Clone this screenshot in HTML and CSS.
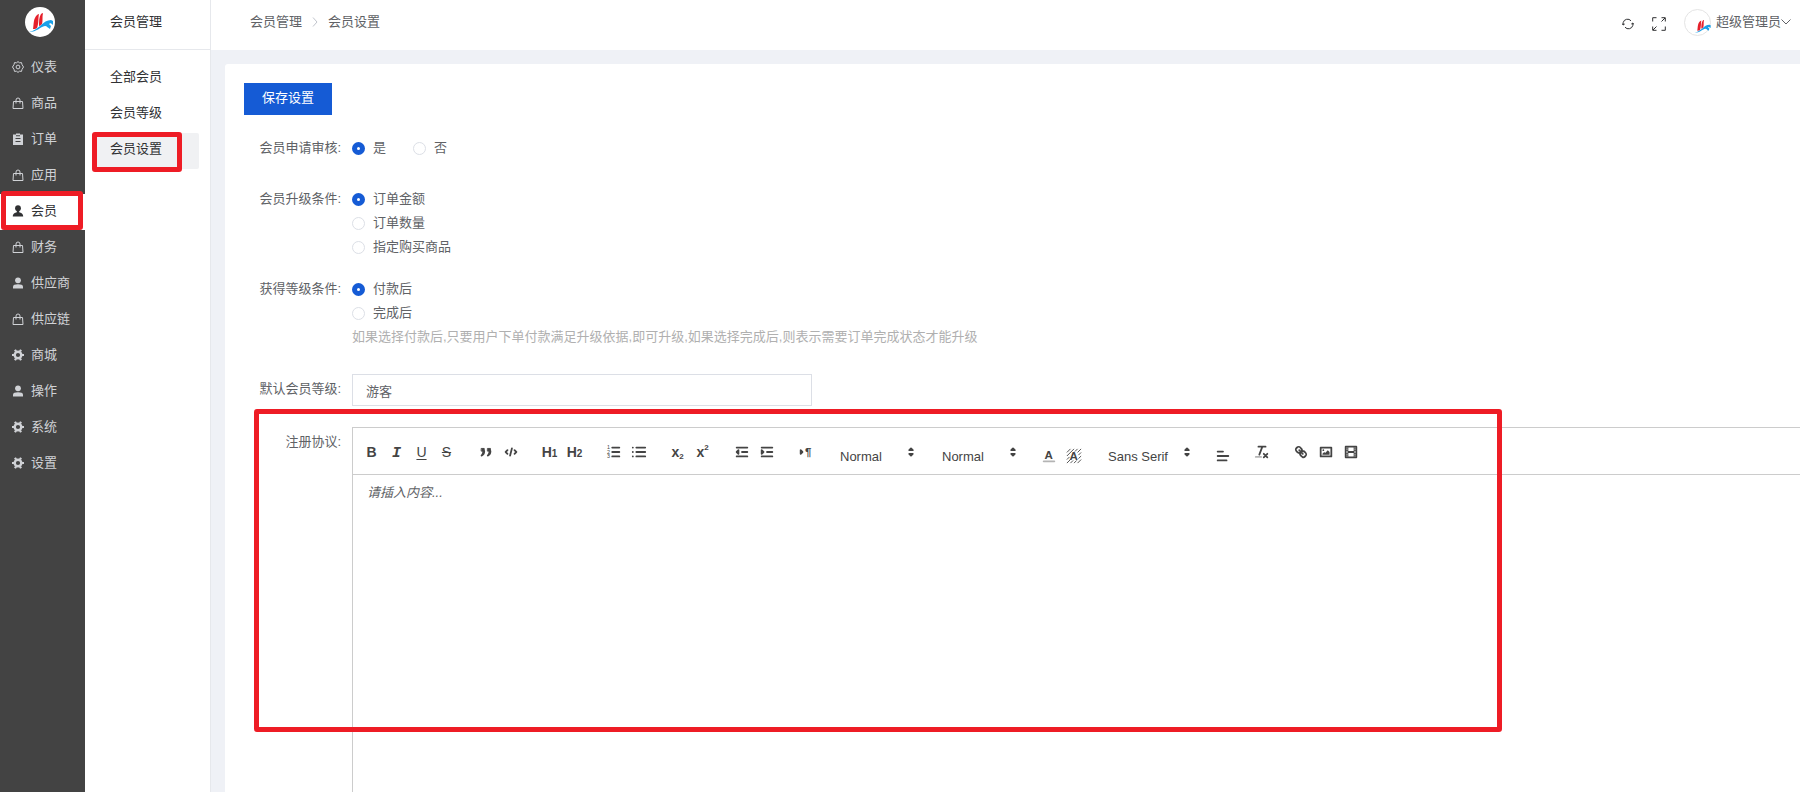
FILE: index.html
```html
<!DOCTYPE html>
<html lang="zh-CN">
  <head>
    <meta charset="UTF-8">
    <meta name="viewport" content="width=device-width, initial-scale=1.0">
    <link rel="stylesheet" href="styles.css">
    <title>会员设置</title>
  </head>
  <body>
    <svg class="sprite" aria-hidden="true">
      <symbol id="i-logo" viewBox="0 0 30 30">
        <path fill="#e5202b" d="M8 22C9 17 8 12 12 8c1-1 2-1 2-1-1 4 0 9-2 14-1 1-3 1-4 1zM14 19c0-5 0-9 2-12 1-1 2-1 2-1-1 4 0 8-1 11-1 1-2 2-3 2z"/>
        <path fill="#1aa0e8" d="M4 25c5-1 8-4 11-6 4-4 7-6 11-6l2 1v4c-2-2-3-2-4-1l2 2-1 3c-2-1-3-3-5-3-5 1-8 6-16 6z"/>
      </symbol>
      <symbol id="i-bag" viewBox="0 0 12 12">
        <path class="line" d="M1.500 4.500h9l.5 7H1zM4 6.500V3a2 2 0 0 1 4 0v3.500"/>
      </symbol>
      <symbol id="i-board" viewBox="0 0 12 12">
        <path fill="currentColor" fill-rule="evenodd" d="M1 1.500h3V.5h4v1h3V12H1zM3.500 5v1h5V5zm0 3v1h5V8zM4 2.300v1h4v-1z"/>
      </symbol>
      <symbol id="i-user" viewBox="0 0 12 12">
        <circle fill="currentColor" cx="6" cy="3.300" r="2.900"/>
        <path fill="currentColor" d="M1 11.500V9.500C1 8 3 7.200 6 7.200s5 .8 5 2.300v2z"/>
      </symbol>
      <symbol id="i-member" viewBox="0 0 12 12">
        <circle fill="currentColor" cx="6" cy="3.200" r="2.900"/>
        <path fill="currentColor" d="M.8 11.500C.8 8.500 3 8 4.800 7.300V5.500h2.400v1.800C9 8 11.200 8.500 11.200 11.500z"/>
      </symbol>
      <symbol id="i-gear" viewBox="0 0 12 12">
        <circle cx="6" cy="6" r="3.300" fill="none" stroke="currentColor" stroke-width="2.400"/>
        <path stroke="currentColor" stroke-width="2.200" d="M0 6h2M10 6h2M3 .8l1 1.700M8 9.500l1 1.700M9 .8L8 2.500M4 9.500l-1 1.700"/>
      </symbol>
      <symbol id="i-gear-line" viewBox="0 0 12 12">
        <circle class="line" cx="6" cy="6" r="1.900"/>
        <path class="line" d="M4.500 1.800L6 .6l1.500 1.200 2-.2.500 2L11.500 6 10 8.400l-.5 2-2-.2L6 11.400l-1.500-1.200-2 .2-.5-2L.5 6 2 3.600l.5-2z"/>
      </symbol>
    </svg>

    <div class="layout">
      <aside class="sidebar">
        <div class="logo"><svg><use href="#i-logo"/></svg></div>
        <nav>
          <a href="#"><svg><use href="#i-gear-line"/></svg>仪表</a>
          <a href="#"><svg><use href="#i-bag"/></svg>商品</a>
          <a href="#"><svg><use href="#i-board"/></svg>订单</a>
          <a href="#"><svg><use href="#i-bag"/></svg>应用</a>
          <a href="#" class="active"><svg><use href="#i-member"/></svg>会员<span class="mark"></span></a>
          <a href="#"><svg><use href="#i-bag"/></svg>财务</a>
          <a href="#"><svg><use href="#i-user"/></svg>供应商</a>
          <a href="#"><svg><use href="#i-bag"/></svg>供应链</a>
          <a href="#"><svg><use href="#i-gear"/></svg>商城</a>
          <a href="#"><svg><use href="#i-user"/></svg>操作</a>
          <a href="#"><svg><use href="#i-gear"/></svg>系统</a>
          <a href="#"><svg><use href="#i-gear"/></svg>设置</a>
        </nav>
      </aside>

      <aside class="submenu">
        <div class="submenu-title">会员管理</div>
        <nav>
          <a href="#">全部会员</a>
          <a href="#">会员等级</a>
          <a href="#" class="active">会员设置<span class="mark"></span></a>
        </nav>
      </aside>

      <main class="main">
        <header class="topbar">
          <div class="breadcrumb">
            <a href="#">会员管理</a>
            <svg class="sep" viewBox="0 0 6 10"><path class="line" d="M1 .5L5 5 1 9.500"/></svg>
            <span>会员设置</span>
          </div>
          <div class="tools">
            <button class="tool" aria-label="刷新">
              <svg viewBox="0 0 12 12"><path class="line" d="M1.200 7V4.500A4.500 4.500 0 0 1 9 2.800M10.800 5v2.500A4.500 4.500 0 0 1 3 9.200M.2 5.500l1 1.500 1.500-1M11.800 6.500l-1-1.500-1.500 1"/></svg>
            </button>
            <button class="tool" aria-label="全屏">
              <svg class="full" viewBox="0 0 14 14"><path class="line" d="M.7 4.500V.7h3.800M9.500.7h3.800v3.800M13.300 9.500v3.800H9.500M4.500 13.300H.7V9.500M13 1L9.500 4.500M1 13l3.500-3.500"/></svg>
            </button>
            <a href="#" class="user">
              <span class="avatar"><svg><use href="#i-logo"/></svg></span>
              超级管理员
              <svg class="caret" viewBox="0 0 10 6"><path class="line" d="M.5.5L5 5 9.500.5"/></svg>
            </a>
          </div>
        </header>

        <form class="card">
          <button type="button" class="save">保存设置</button>

          <div class="row" role="radiogroup" aria-labelledby="l-audit">
            <span class="label" id="l-audit">会员申请审核:</span>
            <div class="inline">
              <label class="radio"><input type="radio" name="audit" checked>是</label>
              <label class="radio"><input type="radio" name="audit">否</label>
            </div>
          </div>

          <div class="row row-upgrade" role="radiogroup" aria-labelledby="l-upgrade">
            <span class="label" id="l-upgrade">会员升级条件:</span>
            <div>
              <label class="radio"><input type="radio" name="upgrade" checked>订单金额</label>
              <label class="radio"><input type="radio" name="upgrade">订单数量</label>
              <label class="radio"><input type="radio" name="upgrade">指定购买商品</label>
            </div>
          </div>

          <div class="row row-hint" role="radiogroup" aria-labelledby="l-when">
            <span class="label" id="l-when">获得等级条件:</span>
            <div>
              <label class="radio"><input type="radio" name="when" checked>付款后</label>
              <label class="radio"><input type="radio" name="when">完成后</label>
              <p class="hint">如果选择付款后,只要用户下单付款满足升级依据,即可升级,如果选择完成后,则表示需要订单完成状态才能升级</p>
            </div>
          </div>

          <div class="row row-level">
            <label class="label" for="level">默认会员等级:</label>
            <input type="text" class="text" id="level" value="游客">
          </div>

          <div class="row row-editor">
            <label class="label" for="agreement">注册协议:</label>
            <div class="editor">
              <div class="toolbar">
                <div class="group">
                  <button type="button" class="bold">B</button>
                  <button type="button" class="italic">I</button>
                  <button type="button" class="underline">U</button>
                  <button type="button" class="strike">S</button>
                </div>
                <div class="group">
                  <button type="button" aria-label="引用"><svg viewBox="0 0 18 18"><rect class="both" x="4" y="5" width="3" height="3"/><rect class="both" x="11" y="5" width="3" height="3"/><path class="both thick" d="M7 8c0 4-3 5-3 5 2-1 2-3 2-5zM14 8c0 4-3 5-3 5 2-1 2-3 2-5z"/></svg></button>
                  <button type="button" aria-label="代码"><svg viewBox="0 0 18 18"><path class="stroke" d="M5 7L3 9l2 2M13 7l2 2-2 2M10 5L8 13"/></svg></button>
                </div>
                <div class="group">
                  <button type="button" class="head">H<small>1</small></button>
                  <button type="button" class="head">H<small>2</small></button>
                </div>
                <div class="group">
                  <button type="button" aria-label="有序列表"><svg viewBox="0 0 18 18"><path class="stroke" d="M7 4h8M7 9h8M7 14h8"/><text class="num" x="1" y="6">1</text><text class="num" x="1" y="11">2</text><text class="num" x="1" y="16">3</text></svg></button>
                  <button type="button" aria-label="无序列表"><svg viewBox="0 0 18 18"><path class="stroke" d="M6 4h10M6 9h10M6 14h10M2 4h.1M2 9h.1M2 14h.1"/></svg></button>
                </div>
                <div class="group">
                  <button type="button" class="script">x<sub>2</sub></button>
                  <button type="button" class="script">x<sup>2</sup></button>
                </div>
                <div class="group">
                  <button type="button" aria-label="减少缩进"><svg viewBox="0 0 18 18"><path class="stroke" d="M3 14h12M3 4h12M9 9h6"/><path class="both thick" d="M5 7v4L3 9z"/></svg></button>
                  <button type="button" aria-label="增加缩进"><svg viewBox="0 0 18 18"><path class="stroke" d="M3 14h12M3 4h12M9 9h6"/><path class="both thick" d="M3 7v4l2-2z"/></svg></button>
                </div>
                <div class="group">
                  <button type="button" aria-label="文字方向"><svg viewBox="0 0 18 18"><path class="both thick" d="M3 7v4l2-2z"/><text class="glyph" x="8" y="13">¶</text></svg></button>
                </div>
                <div class="group picker">
                  <select aria-label="字号"><option>Normal</option></select>
                  <svg viewBox="0 0 18 18"><path class="both thick" d="M7 11h4l-2 2zM7 7h4L9 5z"/></svg>
                </div>
                <div class="group picker">
                  <select aria-label="标题"><option>Normal</option></select>
                  <svg viewBox="0 0 18 18"><path class="both thick" d="M7 11h4l-2 2zM7 7h4L9 5z"/></svg>
                </div>
                <div class="group low">
                  <button type="button" aria-label="文字颜色"><svg viewBox="0 0 18 18"><path class="stroke faint" d="M3 15h12"/><text class="glyph" x="4" y="12">A</text></svg></button>
                  <button type="button" aria-label="背景颜色"><svg viewBox="0 0 18 18"><path class="hatch" d="M1 5l4-4M1 9l8-8M1 13l3-3M10 4l3-3M1 17l4-4M13 5l4-4M5 17l3-3M14 8l3-3M9 17l3-3M14 12l3-3M13 17l4-4"/><text class="glyph" x="4" y="14">A</text></svg></button>
                </div>
                <div class="group picker wide">
                  <select aria-label="字体"><option>Sans Serif</option></select>
                  <svg viewBox="0 0 18 18"><path class="both thick" d="M7 11h4l-2 2zM7 7h4L9 5z"/></svg>
                </div>
                <div class="group low">
                  <button type="button" aria-label="对齐"><svg viewBox="0 0 18 18"><path class="stroke" d="M3 9h12M3 14h10M3 4h6"/></svg></button>
                </div>
                <div class="group">
                  <button type="button" aria-label="清除格式"><svg viewBox="0 0 18 18"><path class="stroke" d="M5 3h8M6 12L9.400 3M11 11l4 4M15 11l-4 4"/><path class="stroke faint" d="M2 14.500h6"/></svg></button>
                </div>
                <div class="group">
                  <button type="button" aria-label="链接"><svg viewBox="0 0 18 18"><path class="stroke" d="M7 7l4 4M8.900 4.577a3.476 3.476 0 0 1 .36 4.679A3.476 3.476 0 0 1 4.577 8.900C3.185 7.500 2.035 6.400 4.217 4.217S7.500 3.185 8.900 4.577zM13.423 9.100a3.476 3.476 0 0 0-4.679-.36 3.476 3.476 0 0 0 .36 4.679c1.392 1.392 2.500 2.542 4.679.36S14.815 10.500 13.423 9.100z"/></svg></button>
                  <button type="button" aria-label="图片"><svg viewBox="0 0 18 18"><rect class="stroke" x="3" y="4" width="12" height="10"/><circle class="fill" cx="6" cy="7" r="1"/><path class="fill" d="M5 12v-1l2-2 1 1 3-3 2 2v3z"/></svg></button>
                  <button type="button" aria-label="视频"><svg viewBox="0 0 18 18"><rect class="stroke" x="3" y="3" width="12" height="12"/><path class="fill" d="M5 3h1v12H5zM12 3h1v12h-1zM5 8h8v2H5zM3 5h3v1H3zM3 7h3v1H3zM3 10h3v1H3zM3 12h3v1H3zM12 5h3v1h-3zM12 7h3v1h-3zM12 10h3v1h-3zM12 12h3v1h-3z"/></svg></button>
                </div>
              </div>
              <textarea id="agreement" placeholder="请插入内容..."></textarea>
            </div>
            <span class="mark"></span>
          </div>
        </form>
      </main>
    </div>
  </body>
</html>
```

FILE: styles.css
```css
* {
  box-sizing: border-box;
}

body {
  margin: 0;
  font-family: "Liberation Sans", "Noto Sans CJK SC", sans-serif;
  font-size: 13px;
  line-height: 24px;
  color: #606266;
  background: #eff1f6;
}

a {
  color: inherit;
  text-decoration: none;
}

button,
input,
select,
textarea {
  font: inherit;
  color: inherit;
}

button {
  padding: 0;
  border: none;
  background: none;
  cursor: pointer;
}

svg {
  display: block;
}

.sprite {
  display: none;
}

.line {
  fill: none;
  stroke: currentColor;
}

.layout {
  display: flex;
  height: 100vh;
  overflow: hidden;
}

/* red frames around the highlighted parts */
.mark {
  position: absolute;
  border: 5px solid #ee1c25;
  border-radius: 3px;
  pointer-events: none;
}

/* dark menu */
.sidebar {
  flex: 0 0 85px;
  background: #434343;
  color: #d0d2d6;
}

.logo {
  height: 50px;
  padding: 7px 25px;
}

.logo svg {
  width: 30px;
  height: 30px;
  border-radius: 50%;
  background: #fff;
}

.sidebar a {
  position: relative;
  display: flex;
  align-items: center;
  gap: 7px;
  height: 36px;
  padding: 0 0 2px 12px;
}

.sidebar a svg {
  width: 12px;
  height: 12px;
}

.sidebar .active {
  background: #fff;
  color: #303133;
}

.sidebar .mark {
  inset: -3px 2px 0 1px;
}

/* second menu */
.submenu {
  flex: 0 0 126px;
  background: #fff;
  border-right: 1px solid #e6e8ec;
  color: #303133;
}

.submenu-title {
  height: 50px;
  padding: 10px 25px;
  border-bottom: 1px solid #e6e8ec;
}

.submenu nav {
  padding: 11px 11px 0 10px;
}

.submenu a {
  position: relative;
  display: block;
  height: 36px;
  padding: 4px 15px;
}

.submenu .active {
  background: #f0f1f3;
  border-radius: 2px;
}

.submenu .mark {
  inset: -1px 17px -3px -3px;
}

/* content */
.main {
  flex: 1;
  min-width: 0;
  display: flex;
  flex-direction: column;
}

.topbar {
  flex: none;
  display: flex;
  justify-content: space-between;
  height: 50px;
  padding: 10px 9px 16px 39px;
  background: #fff;
}

.breadcrumb,
.tools,
.user {
  display: flex;
  align-items: center;
}

.breadcrumb {
  gap: 10px;
}

.sep {
  width: 6px;
  height: 10px;
  color: #c0c4cc;
}

.tool {
  margin-right: 18px;
  padding-top: 3px;
}

.tool svg {
  width: 12px;
  height: 12px;
  color: #303133;
}

.tool .full {
  width: 14px;
  height: 14px;
}

.avatar {
  width: 27px;
  height: 27px;
  margin-right: 5px;
  padding: 6px 0 0 7px;
  border: 1px solid #e4e4e4;
  border-radius: 50%;
}

.avatar svg {
  width: 20px;
  height: 20px;
}

.caret {
  width: 10px;
  height: 6px;
}

.card {
  flex: 1;
  margin: 14px 0 0 14px;
  padding: 19px 0 0 19px;
  background: #fff;
  border-radius: 3px 0 0 0;
}

.save {
  display: block;
  height: 32px;
  padding: 0 18px 2px;
  margin-bottom: 21px;
  background: #155bd5;
  color: #fff;
}

.row {
  position: relative;
  display: flex;
  margin-bottom: 27px;
}

.label {
  flex: 0 0 108px;
  padding-right: 11px;
  text-align: right;
  white-space: nowrap;
}

.inline {
  display: flex;
  gap: 27px;
}

.radio {
  display: flex;
  align-items: center;
  gap: 8px;
}

.radio input {
  appearance: none;
  width: 13px;
  height: 13px;
  margin: 0;
  border: 1px solid #dcdfe6;
  border-radius: 50%;
}

.radio input:checked {
  border: 5px solid #155bd5;
}

.row-upgrade {
  margin-bottom: 18px;
}

.row-hint {
  margin-bottom: 25px;
}

.hint {
  margin: 0;
  color: #b0b0b0;
}

.row-level {
  margin-bottom: 21px;
}

.row-level .label {
  padding-top: 3px;
}

.text {
  width: 460px;
  height: 32px;
  padding: 0 13px;
  border: 1px solid #dcdfe6;
}

.row-editor .label {
  padding-top: 3px;
}

.row-editor .mark {
  inset: -18px 298px auto 10px;
  height: 323px;
}

/* rich text editor */
.editor {
  flex: 1;
  border: 1px solid #ccc;
  border-right: none;
}

.toolbar {
  display: flex;
  gap: 14px;
  height: 47px;
  padding: 13px 6px 0;
  border-bottom: 1px solid #ccc;
  color: #444;
}

.group {
  display: flex;
  height: 22px;
}

.group button {
  display: flex;
  align-items: center;
  justify-content: center;
  width: 25px;
  height: 22px;
  line-height: 22px;
}

.group svg {
  width: 16px;
  height: 16px;
}

.low {
  padding-top: 4px;
}

.group .bold {
  font-size: 14px;
  font-weight: bold;
}

.group .italic {
  padding-top: 3px;
  font-family: "Liberation Mono", monospace;
  font-size: 15px;
  font-weight: bold;
  font-style: italic;
}

.group .underline {
  font-size: 14px;
  text-decoration: underline;
  text-underline-offset: 2px;
}

.group .strike {
  font-size: 14px;
  text-decoration: line-through;
}

.group .head {
  font-size: 14px;
  font-weight: bold;
}

.head small {
  padding-top: 3px;
  font-size: 10px;
}

.group .script {
  font-size: 14px;
  font-weight: bold;
}

.script sub,
.script sup {
  font-size: 8px;
  line-height: 8px;
}

.script sub {
  padding-top: 10px;
}

.script sup {
  padding-bottom: 8px;
}

.stroke,
.both {
  fill: none;
  stroke: #444;
  stroke-width: 2;
  stroke-linecap: round;
  stroke-linejoin: round;
}

.both,
.fill {
  fill: #444;
}

.both {
  stroke-width: 1;
}

.thick {
  stroke-width: 2;
}

.faint {
  opacity: 0.4;
}

.hatch {
  stroke: #444;
  stroke-width: 1;
}

.glyph {
  font-size: 13px;
  font-weight: bold;
  fill: #444;
}

.num {
  font-size: 6px;
  fill: #444;
}

.picker {
  position: relative;
  width: 88px;
}

.wide {
  width: 96px;
}

.picker select {
  appearance: none;
  width: 100%;
  height: 32px;
  padding: 0 8px;
  border: none;
  background: none;
}

.picker svg {
  position: absolute;
  top: 3px;
  right: 1px;
  pointer-events: none;
}

.editor textarea {
  display: block;
  width: 100%;
  height: 500px;
  padding: 6px 14px;
  border: none;
  resize: none;
}

.editor textarea::placeholder {
  font-style: italic;
  color: #606266;
}
```
